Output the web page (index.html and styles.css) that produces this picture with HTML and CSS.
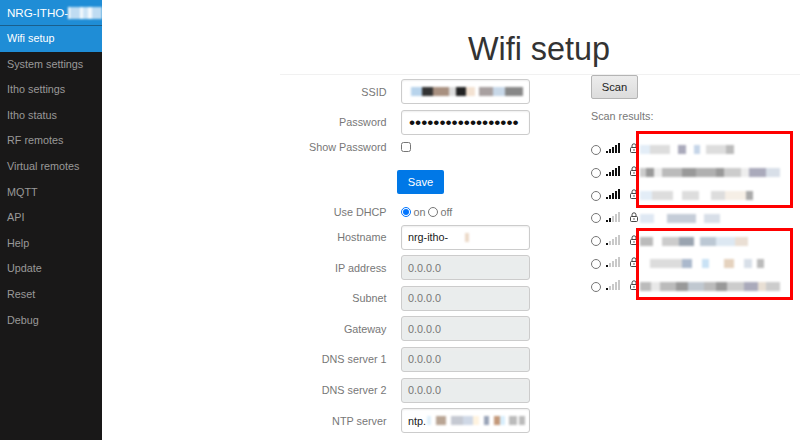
FILE: index.html
```html
<!DOCTYPE html>
<html lang="en">
<head>
    <meta charset="UTF-8">
    <meta name="viewport" content="width=device-width, initial-scale=1.0">
    <title>Wifi setup</title>
    <link rel="stylesheet" href="styles.css">
</head>
<body>
<div class="layout">
    <nav class="menu">
        <div class="menu-heading">NRG-ITHO-<span class="blur blur-heading"></span></div>
        <a class="menu-link active" href="#">Wifi setup</a>
        <a class="menu-link" href="#">System settings</a>
        <a class="menu-link" href="#">Itho settings</a>
        <a class="menu-link" href="#">Itho status</a>
        <a class="menu-link" href="#">RF remotes</a>
        <a class="menu-link" href="#">Virtual remotes</a>
        <a class="menu-link" href="#">MQTT</a>
        <a class="menu-link" href="#">API</a>
        <a class="menu-link" href="#">Help</a>
        <a class="menu-link" href="#">Update</a>
        <a class="menu-link" href="#">Reset</a>
        <a class="menu-link" href="#">Debug</a>
    </nav>

    <main class="main">
        <div class="header">
            <h1>Wifi setup</h1>
        </div>
        <div class="content">
            <form class="settings">
                <div class="form-group">
                    <label>SSID</label>
                    <div class="field"><span class="blur blur-ssid"></span></div>
                </div>
                <div class="form-group">
                    <label>Password</label>
                    <div class="field password">••••••••••••••••••</div>
                </div>
                <div class="form-group check-row">
                    <label>Show Password</label>
                    <input class="check" type="checkbox">
                </div>
                <div class="save-row">
                    <button type="button" class="btn-save">Save</button>
                </div>
                <div class="form-group dhcp-row">
                    <label>Use DHCP</label>
                    <div class="radios">
                        <input class="radio" type="radio" name="dhcp" checked> <span>on</span>
                        <input class="radio" type="radio" name="dhcp"> <span>off</span>
                    </div>
                </div>
                <div class="form-group">
                    <label>Hostname</label>
                    <div class="field">nrg-itho-<span class="blur blur-host"></span></div>
                </div>
                <div class="form-group">
                    <label>IP address</label>
                    <div class="field disabled">0.0.0.0</div>
                </div>
                <div class="form-group">
                    <label>Subnet</label>
                    <div class="field disabled">0.0.0.0</div>
                </div>
                <div class="form-group">
                    <label>Gateway</label>
                    <div class="field disabled">0.0.0.0</div>
                </div>
                <div class="form-group">
                    <label>DNS server 1</label>
                    <div class="field disabled">0.0.0.0</div>
                </div>
                <div class="form-group">
                    <label>DNS server 2</label>
                    <div class="field disabled">0.0.0.0</div>
                </div>
                <div class="form-group">
                    <label>NTP server</label>
                    <div class="field">ntp.<span class="blur blur-ntp"></span></div>
                </div>
            </form>

            <section class="scan">
                <button type="button" class="btn-scan">Scan</button>
                <p class="scan-title">Scan results:</p>
                <div class="scan-list">
                    <div class="highlight highlight-top"></div>
                    <div class="highlight highlight-bottom"></div>

                    <div class="scan-row">
                        <input class="radio" type="radio" name="ssid">
                        <svg class="bars" width="15" height="10" viewBox="0 0 15 10"><rect x="0" y="8" width="2" height="2"/><rect x="3" y="6" width="2" height="4"/><rect x="6" y="4" width="2" height="6"/><rect x="9" y="2" width="2" height="8"/><rect x="12" y="0" width="2" height="10"/></svg>
                        <svg class="lock" width="8" height="10" viewBox="0 0 8 10"><path d="M2 4.5V2.8a2 2 0 0 1 4 0v1.7" fill="none" stroke="#333" stroke-width="0.9"/><rect x="0.5" y="4.5" width="7" height="5" rx="1" fill="#fff" stroke="#333" stroke-width="0.9"/><rect x="3.5" y="6.2" width="1" height="1.5" fill="#333"/></svg>
                        <span class="blur blur-net1"></span>
                    </div>
                    <div class="scan-row">
                        <input class="radio" type="radio" name="ssid">
                        <svg class="bars" width="15" height="10" viewBox="0 0 15 10"><rect x="0" y="8" width="2" height="2"/><rect x="3" y="6" width="2" height="4"/><rect x="6" y="4" width="2" height="6"/><rect x="9" y="2" width="2" height="8"/><rect x="12" y="0" width="2" height="10"/></svg>
                        <svg class="lock" width="8" height="10" viewBox="0 0 8 10"><path d="M2 4.5V2.8a2 2 0 0 1 4 0v1.7" fill="none" stroke="#333" stroke-width="0.9"/><rect x="0.5" y="4.5" width="7" height="5" rx="1" fill="#fff" stroke="#333" stroke-width="0.9"/><rect x="3.5" y="6.2" width="1" height="1.5" fill="#333"/></svg>
                        <span class="blur blur-net2"></span>
                    </div>
                    <div class="scan-row">
                        <input class="radio" type="radio" name="ssid">
                        <svg class="bars" width="15" height="10" viewBox="0 0 15 10"><rect x="0" y="8" width="2" height="2"/><rect x="3" y="6" width="2" height="4"/><rect x="6" y="4" width="2" height="6"/><rect x="9" y="2" width="2" height="8"/><rect x="12" y="0" width="2" height="10"/></svg>
                        <svg class="lock" width="8" height="10" viewBox="0 0 8 10"><path d="M2 4.5V2.8a2 2 0 0 1 4 0v1.7" fill="none" stroke="#333" stroke-width="0.9"/><rect x="0.5" y="4.5" width="7" height="5" rx="1" fill="#fff" stroke="#333" stroke-width="0.9"/><rect x="3.5" y="6.2" width="1" height="1.5" fill="#333"/></svg>
                        <span class="blur blur-net3"></span>
                    </div>
                    <div class="scan-row">
                        <input class="radio" type="radio" name="ssid">
                        <svg class="bars" width="15" height="10" viewBox="0 0 15 10"><rect x="0" y="8" width="2" height="2"/><rect x="3" y="6" width="2" height="4"/><rect class="off" x="6" y="4" width="2" height="6"/><rect class="off" x="9" y="2" width="2" height="8"/><rect class="off" x="12" y="0" width="2" height="10"/></svg>
                        <svg class="lock" width="8" height="10" viewBox="0 0 8 10"><path d="M2 4.5V2.8a2 2 0 0 1 4 0v1.7" fill="none" stroke="#333" stroke-width="0.9"/><rect x="0.5" y="4.5" width="7" height="5" rx="1" fill="#fff" stroke="#333" stroke-width="0.9"/><rect x="3.5" y="6.2" width="1" height="1.5" fill="#333"/></svg>
                        <span class="blur blur-net4"></span>
                    </div>
                    <div class="scan-row">
                        <input class="radio" type="radio" name="ssid">
                        <svg class="bars" width="15" height="10" viewBox="0 0 15 10"><rect x="0" y="8" width="2" height="2"/><rect class="off" x="3" y="6" width="2" height="4"/><rect class="off" x="6" y="4" width="2" height="6"/><rect class="off" x="9" y="2" width="2" height="8"/><rect class="off" x="12" y="0" width="2" height="10"/></svg>
                        <svg class="lock" width="8" height="10" viewBox="0 0 8 10"><path d="M2 4.5V2.8a2 2 0 0 1 4 0v1.7" fill="none" stroke="#333" stroke-width="0.9"/><rect x="0.5" y="4.5" width="7" height="5" rx="1" fill="#fff" stroke="#333" stroke-width="0.9"/><rect x="3.5" y="6.2" width="1" height="1.5" fill="#333"/></svg>
                        <span class="blur blur-net5"></span>
                    </div>
                    <div class="scan-row">
                        <input class="radio" type="radio" name="ssid">
                        <svg class="bars" width="15" height="10" viewBox="0 0 15 10"><rect x="0" y="8" width="2" height="2"/><rect class="off" x="3" y="6" width="2" height="4"/><rect class="off" x="6" y="4" width="2" height="6"/><rect class="off" x="9" y="2" width="2" height="8"/><rect class="off" x="12" y="0" width="2" height="10"/></svg>
                        <svg class="lock" width="8" height="10" viewBox="0 0 8 10"><path d="M2 4.5V2.8a2 2 0 0 1 4 0v1.7" fill="none" stroke="#333" stroke-width="0.9"/><rect x="0.5" y="4.5" width="7" height="5" rx="1" fill="#fff" stroke="#333" stroke-width="0.9"/><rect x="3.5" y="6.2" width="1" height="1.5" fill="#333"/></svg>
                        <span class="blur blur-net6"></span>
                    </div>
                    <div class="scan-row">
                        <input class="radio" type="radio" name="ssid">
                        <svg class="bars" width="15" height="10" viewBox="0 0 15 10"><rect x="0" y="8" width="2" height="2"/><rect class="off" x="3" y="6" width="2" height="4"/><rect class="off" x="6" y="4" width="2" height="6"/><rect class="off" x="9" y="2" width="2" height="8"/><rect class="off" x="12" y="0" width="2" height="10"/></svg>
                        <svg class="lock" width="8" height="10" viewBox="0 0 8 10"><path d="M2 4.5V2.8a2 2 0 0 1 4 0v1.7" fill="none" stroke="#333" stroke-width="0.9"/><rect x="0.5" y="4.5" width="7" height="5" rx="1" fill="#fff" stroke="#333" stroke-width="0.9"/><rect x="3.5" y="6.2" width="1" height="1.5" fill="#333"/></svg>
                        <span class="blur blur-net7"></span>
                    </div>
                </div>
            </section>
        </div>
    </main>
</div>
</body>
</html>
```

FILE: styles.css
```css
html, body {
    margin: 0;
    height: 100%;
    overflow: hidden;
}
body {
    font-family: "Liberation Sans", Arial, sans-serif;
    font-size: 10.8px;
    color: #777;
    background-color: #fff;
}
.layout {
    display: flex;
    height: 440px;
}

/* side menu */
.menu {
    width: 102px;
    flex-shrink: 0;
    background-color: #191818;
}
.menu-heading {
    display: flex;
    align-items: center;
    height: 25px;
    padding-left: 7px;
    font-size: 11.6px;
    color: #fff;
    background-color: #1f8dd6;
    border-bottom: 1px solid #1a5f8c;
    white-space: nowrap;
    overflow: hidden;
}
.menu-link {
    display: block;
    height: 25.6px;
    line-height: 25.6px;
    padding-left: 7px;
    color: #999;
    text-decoration: none;
    white-space: nowrap;
}
.menu-link.active {
    color: #fff;
    background-color: #1f8dd6;
}

/* page */
.main {
    flex: 1;
    padding-left: 178px;
}
.header {
    height: 74px;
    padding-right: 2px;
    border-bottom: 1px solid #f1f1f1;
    text-align: center;
}
.header h1 {
    margin: 0;
    padding-top: 31px;
    font-size: 32.4px;
    line-height: 37px;
    font-weight: normal;
    color: #333;
}
.content {
    display: flex;
}

/* form */
.settings {
    width: 311px;
    padding-top: 4px;
}
.form-group {
    display: flex;
    align-items: center;
    margin-bottom: 5.6px;
}
.form-group label {
    width: 106.5px;
    margin-right: 14.5px;
    text-align: right;
}
.field {
    box-sizing: border-box;
    display: flex;
    align-items: center;
    width: 129px;
    height: 25px;
    padding: 0 6px;
    color: #222;
    border: 1px solid #ccc;
    border-radius: 3px;
    box-shadow: inset 0 1px 2px #eee;
    white-space: nowrap;
    overflow: hidden;
}
.field.disabled {
    color: #777;
    background-color: #eaeded;
}
.field.password {
    padding-left: 7px;
    font-size: 17.4px;
    color: #111;
}
.check-row {
    height: 12px;
    margin-top: 6px;
    margin-bottom: 0;
}
.check {
    width: 10px;
    height: 10px;
    margin: 0;
}
.save-row {
    padding: 17px 0 0 117px;
}
.btn-save {
    width: 47px;
    height: 24px;
    padding: 0;
    font-family: inherit;
    font-size: 11.2px;
    color: #fff;
    background-color: #0078e7;
    border: none;
    border-radius: 2px;
}
.dhcp-row {
    height: 12px;
    margin-top: 12px;
    margin-bottom: 7px;
}
.radios {
    display: flex;
    align-items: center;
    gap: 2.5px;
}
.radio {
    width: 10px;
    height: 10px;
    margin: 0;
    flex-shrink: 0;
}

/* scan column */
.scan {
    flex: 1;
    white-space: nowrap;
}
.btn-scan {
    display: block;
    width: 47px;
    height: 24px;
    padding: 0;
    font-family: inherit;
    font-size: 11.2px;
    color: #222;
    background: linear-gradient(#ececec, #dcdcdc);
    border: 1px solid #b4b4b4;
    border-radius: 2px;
}
.scan-title {
    margin: 11px 0 0;
    line-height: 13px;
}
.scan-list {
    position: relative;
    padding-top: 15.6px;
}
.scan-row {
    display: flex;
    align-items: center;
    height: 22.8px;
}
.bars {
    margin: -3px 0 0 5px;
    fill: #111;
    flex-shrink: 0;
}
.bars .off {
    fill: #c9c9c9;
}
.lock {
    margin: -3px 0 0 9px;
    flex-shrink: 0;
}
.highlight {
    position: absolute;
    z-index: 1;
    left: 45px;
    width: 157px;
    box-sizing: border-box;
    border: 3px solid #f00;
}
.highlight-top {
    top: 8px;
    height: 77px;
}
.highlight-bottom {
    top: 105px;
    height: 72px;
}

/* pixelated cover over private values */
.blur {
    display: block;
    height: 9px;
    flex-shrink: 0;
    filter: blur(1px);
}
.blur-heading {
    width: 34px;
    height: 12px;
    background: linear-gradient(90deg, #fff 0 5%, #bfdcf2 5% 35%, #f4f9fd 35% 45%, #cbe3f5 45% 60%, #f4f9fd 60% 70%, #bfdcf2 70% 100%);
}
.blur-ssid {
    width: 115px;
    background: linear-gradient(90deg, #fff 0 3%, #b8d4ec 3% 12%, #333 12% 22%, #a89080 22% 36%, #ddd 36% 42%, #222 42% 50%, #f3e2d2 50% 58%, #fff 58% 62%, #a8a0a0 62% 74%, #c8d8e8 74% 84%, #888 84% 100%);
}
.blur-host {
    width: 4px;
    margin-left: 17px;
    background: #ecd9c8;
}
.blur-ntp {
    width: 98px;
    margin-left: 1px;
    background: linear-gradient(90deg, #e0f0fb 0 4%, #fff 4% 9%, #b9a594 9% 19%, #fff 19% 24%, #c5c9d2 24% 37%, #cfd8e6 37% 47%, #fff3df 47% 53%, #fff 53% 58%, #9aa4b8 58% 63%, #fff 63% 68%, #c4997a 68% 75%, #d8eefc 75% 80%, #fff 80% 84%, #bbb 84% 92%, #fff 92% 94%, #bbb 94% 100%);
}
.blur-net1,
.blur-net2,
.blur-net3,
.blur-net4,
.blur-net5,
.blur-net6,
.blur-net7 {
    margin-left: 2px;
}
.blur-net1 {
    width: 100px;
    background: linear-gradient(90deg, #e3edf7 0 10%, #ddd 10% 30%, #fff 30% 38%, #aab 38% 46%, #fff 46% 54%, #c5d5e8 54% 60%, #fff 60% 66%, #ddd 66% 86%, #bbb 86% 94%, #fff 94% 100%);
}
.blur-net2 {
    width: 140px;
    background: linear-gradient(90deg, #ccc 0 4%, #999 4% 10%, #eee 10% 16%, #bbb 16% 30%, #999 30% 40%, #b0b0b0 40% 54%, #999 54% 60%, #ccc 60% 72%, #eee 72% 78%, #aab 78% 90%, #d8dfe8 90% 100%);
}
.blur-net3 {
    width: 118px;
    background: linear-gradient(90deg, #e3edf7 0 10%, #ddd 10% 28%, #fff 28% 36%, #ddd 36% 50%, #fff 50% 60%, #ddd 60% 72%, #f6efe6 72% 90%, #aaa 90% 96%, #fff 96% 100%);
}
.blur-net4 {
    width: 80px;
    background: linear-gradient(90deg, #dfe8f3 0 18%, #fff 18% 34%, #c5cdd8 34% 70%, #fff 70% 80%, #d8dfe8 80% 100%);
}
.blur-net5 {
    width: 108px;
    background: linear-gradient(90deg, #bbb 0 12%, #fff 12% 20%, #ccc 20% 36%, #9aa4b0 36% 50%, #fff 50% 56%, #bcc8d4 56% 70%, #dde8f2 70% 88%, #eadfd4 88% 100%);
}
.blur-net6 {
    width: 124px;
    background: linear-gradient(90deg, #fff 0 8%, #dcdcdc 8% 34%, #aab8cc 34% 42%, #fff 42% 50%, #c9e2f5 50% 56%, #fff 56% 68%, #e5d2be 68% 76%, #fff 76% 84%, #d8dfe8 84% 90%, #fff 90% 94%, #bbb 94% 100%);
}
.blur-net7 {
    width: 140px;
    background: linear-gradient(90deg, #bbb 0 8%, #e8e8e8 8% 14%, #bbb 14% 26%, #999 26% 34%, #c0c8d0 34% 46%, #bbb 46% 54%, #999 54% 62%, #ccc 62% 74%, #aab 74% 84%, #e8dfd4 84% 90%, #ccc 90% 100%);
}
```
